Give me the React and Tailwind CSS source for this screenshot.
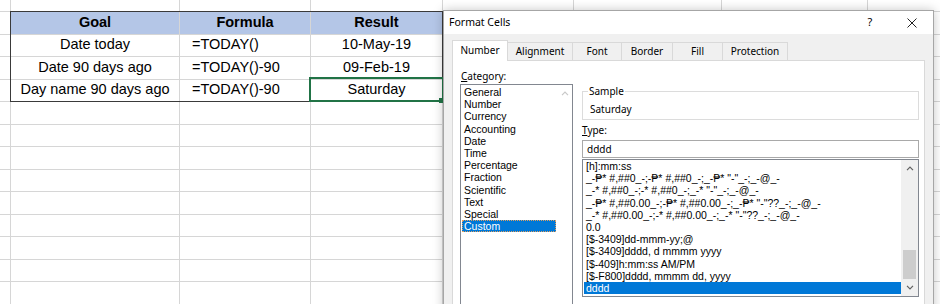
const COL_W = [
  "w-[11px]",
  "w-[169px]",
  "w-[131px]",
  "w-[132px]",
  "w-[131px]",
  "w-[148px]",
  "w-[146px]",
  "w-[172px]",
];

const table = [
  { a: "Goal", b: "Formula", c: "Result", head: true },
  { a: "Date today", b: "=TODAY()", c: "10-May-19" },
  { a: "Date 90 days ago", b: "=TODAY()-90", c: "09-Feb-19" },
  { a: "Day name 90 days ago", b: "=TODAY()-90", c: "Saturday" },
];

const categories = [
  "General",
  "Number",
  "Currency",
  "Accounting",
  "Date",
  "Time",
  "Percentage",
  "Fraction",
  "Scientific",
  "Text",
  "Special",
  "Custom",
];

const types = [
  "[h]:mm:ss",
  '_-₱* #,##0_-;-₱* #,##0_-;_-₱* "-"_-;_-@_-',
  '_-* #,##0_-;-* #,##0_-;_-* "-"_-;_-@_-',
  '_-₱* #,##0.00_-;-₱* #,##0.00_-;_-₱* "-"??_-;_-@_-',
  '_-* #,##0.00_-;-* #,##0.00_-;_-* "-"??_-;_-@_-',
  "0.0",
  "[$-3409]dd-mmm-yy;@",
  "[$-3409]dddd, d mmmm yyyy",
  "[$-409]h:mm:ss AM/PM",
  "[$-F800]dddd, mmmm dd, yyyy",
  "dddd",
];

const tabs = [
  { label: "Alignment", w: "w-[65px]" },
  { label: "Font", w: "w-[49px]" },
  { label: "Border", w: "w-[51px]" },
  { label: "Fill", w: "w-[50px]" },
  { label: "Protection", w: "w-[65px]" },
];

function Chevron({ down, color = "#606060" }) {
  return (
    <svg width="8" height="5" viewBox="0 0 8 5">
      <path
        d={down ? "M1 0.8 L4 3.8 L7 0.8" : "M1 4.2 L4 1.2 L7 4.2"}
        fill="none"
        stroke={color}
        strokeWidth="1.2"
      />
    </svg>
  );
}

function Sheet() {
  const rows = Array.from({ length: 14 }, (_, i) => i);
  return (
    <div className="flex flex-col">
      {rows.map((r) => {
        const t = r >= 1 && r <= 4 ? table[r - 1] : null;
        return (
          <div
            key={r}
            className={`flex shrink-0 ${r === 0 ? "h-[12px]" : "h-[22.5px]"}`}
          >
            {COL_W.map((w, c) => {
              let content = null;
              let extra = "";
              if (t && c >= 1 && c <= 3) {
                const val = c === 1 ? t.a : c === 2 ? t.b : t.c;
                if (t.head) {
                  extra = "bg-[#b4c6e7] font-bold justify-center";
                } else if (c === 2) {
                  extra = "justify-start pl-[12px]";
                } else {
                  extra = "justify-center";
                }
                content = val;
              }
              return (
                <div
                  key={c}
                  className={`${w} flex shrink-0 items-center whitespace-nowrap border-b border-r border-[#d6d6d6] ${extra}`}
                >
                  {content}
                </div>
              );
            })}
          </div>
        );
      })}
    </div>
  );
}

function FormatCells() {
  return (
    <div className="absolute left-[443px] top-[10px] flex h-[310px] w-[491px] flex-col border border-[#a6a6a6] bg-[#f0f0f0] font-['Noto_Sans',sans-serif] text-[10px] text-black shadow-[0_0_10px_rgba(0,0,0,0.22)]">
      {/* title bar */}
      <div className="flex h-[23px] shrink-0 items-center bg-white pl-[5px]">
        <span className="text-[10.5px]">Format Cells</span>
        <div className="ml-auto flex h-full">
          <div className="flex w-[42px] items-center justify-center text-[11px]">?</div>
          <div className="flex w-[42px] items-center justify-center">
            <svg width="10" height="10" viewBox="0 0 10 10">
              <path d="M0.5 0.5 L9.5 9.5 M9.5 0.5 L0.5 9.5" stroke="#222" strokeWidth="1" />
            </svg>
          </div>
        </div>
      </div>

      <div className="flex flex-1 flex-col pl-[8px] pt-[6px]">
        {/* tabs */}
        <div className="relative z-10 flex h-[21px] items-end">
          <div className="flex h-[21px] w-[56px] items-center justify-center border border-b-0 border-[#d9d9d9] bg-white pb-[1px]">
            Number
          </div>
          {tabs.map((t) => (
            <div
              key={t.label}
              className={`${t.w} flex h-[19px] items-center justify-center border-r border-t border-[#d9d9d9] pb-[1px]`}
            >
              {t.label}
            </div>
          ))}
        </div>

        {/* panel */}
        <div className="-mt-[1px] flex w-[473px] flex-1 border border-[#d9d9d9] bg-white pl-[7px] pt-[7px]">
          {/* category */}
          <div className="flex w-[113px] flex-col">
            <div className="h-[16px] pl-[1px] leading-[16px]">
              <span className="underline">C</span>ategory:
            </div>
            <div className="flex h-[240px] border border-[#828790] font-['Liberation_Sans',Arial,sans-serif] text-[10.5px]">
              <div className="flex w-[96px] flex-col px-[1px] pt-[1px]">
                {categories.map((c) =>
                  c === "Custom" ? (
                    <div
                      key={c}
                      className="h-[12.2px] border border-dotted border-[#e0a060] bg-[#0078d7] pl-[1px] leading-[10.2px] text-white"
                    >
                      {c}
                    </div>
                  ) : (
                    <div key={c} className="h-[12.2px] pl-[2px] leading-[12.2px]">
                      {c}
                    </div>
                  )
                )}
              </div>
              <div className="flex w-[15px] flex-col">
                <div className="flex h-[17px] items-center justify-center">
                  <Chevron color="#c8c8c8" />
                </div>
              </div>
            </div>
          </div>

          {/* right side */}
          <div className="ml-[9px] flex w-[337px] flex-col">
            <fieldset className="mt-[17px] h-[35px] border border-[#dcdcdc]">
              <legend className="ml-[5px] px-[1px] leading-[12px]">Sample</legend>
              <div className="mt-[5px] pl-[7px] leading-[14px]">Saturday</div>
            </fieldset>

            <div className="mt-[3px] h-[14px] leading-[14px]">
              <span className="underline">T</span>ype:
            </div>

            <div className="mt-[3px] flex h-[18px] items-center border border-[#a9a9a9] pl-[4px]">
              dddd
            </div>

            <div className="mt-[1px] flex h-[138px] border border-[#828790] font-['Liberation_Sans',Arial,sans-serif] text-[10.5px]">
              <div className="flex flex-1 flex-col pl-[1px]">
                {types.map((t, i) =>
                  i === types.length - 1 ? (
                    <div
                      key={t}
                      className="h-[12.2px] whitespace-pre bg-[#0078d7] pl-[2px] leading-[12.2px] text-white"
                    >
                      {t}
                    </div>
                  ) : (
                    <div key={t} className="h-[12.2px] whitespace-pre pl-[2px] leading-[12.2px]">
                      {t}
                    </div>
                  )
                )}
              </div>
              <div className="flex w-[17px] flex-col bg-[#f0f0f0]">
                <div className="flex h-[17px] items-center justify-center">
                  <Chevron />
                </div>
                <div className="flex flex-1 flex-col">
                  <div className="mx-[2px] mt-auto h-[29px] bg-[#cdcdcd]" />
                </div>
                <div className="flex h-[17px] items-center justify-center">
                  <Chevron down />
                </div>
              </div>
            </div>
          </div>
        </div>
      </div>
    </div>
  );
}

export default function App() {
  return (
    <div className="relative h-[304px] w-[940px] overflow-hidden bg-white font-['Liberation_Sans',Arial,sans-serif] text-[14.5px] text-black">
      <Sheet />
      {/* table outline and active cell */}
      <div className="pointer-events-none absolute left-[10px] top-[11px] h-[91px] w-[433px] border border-[#3a3a3a]" />
      <div className="pointer-events-none absolute left-[309px] top-[77px] h-[25px] w-[135px] border-2 border-[#217346]" />
      <div className="absolute left-[439px] top-[98px] h-[5px] w-[5px] bg-[#217346]" />
      <FormatCells />
    </div>
  );
}
